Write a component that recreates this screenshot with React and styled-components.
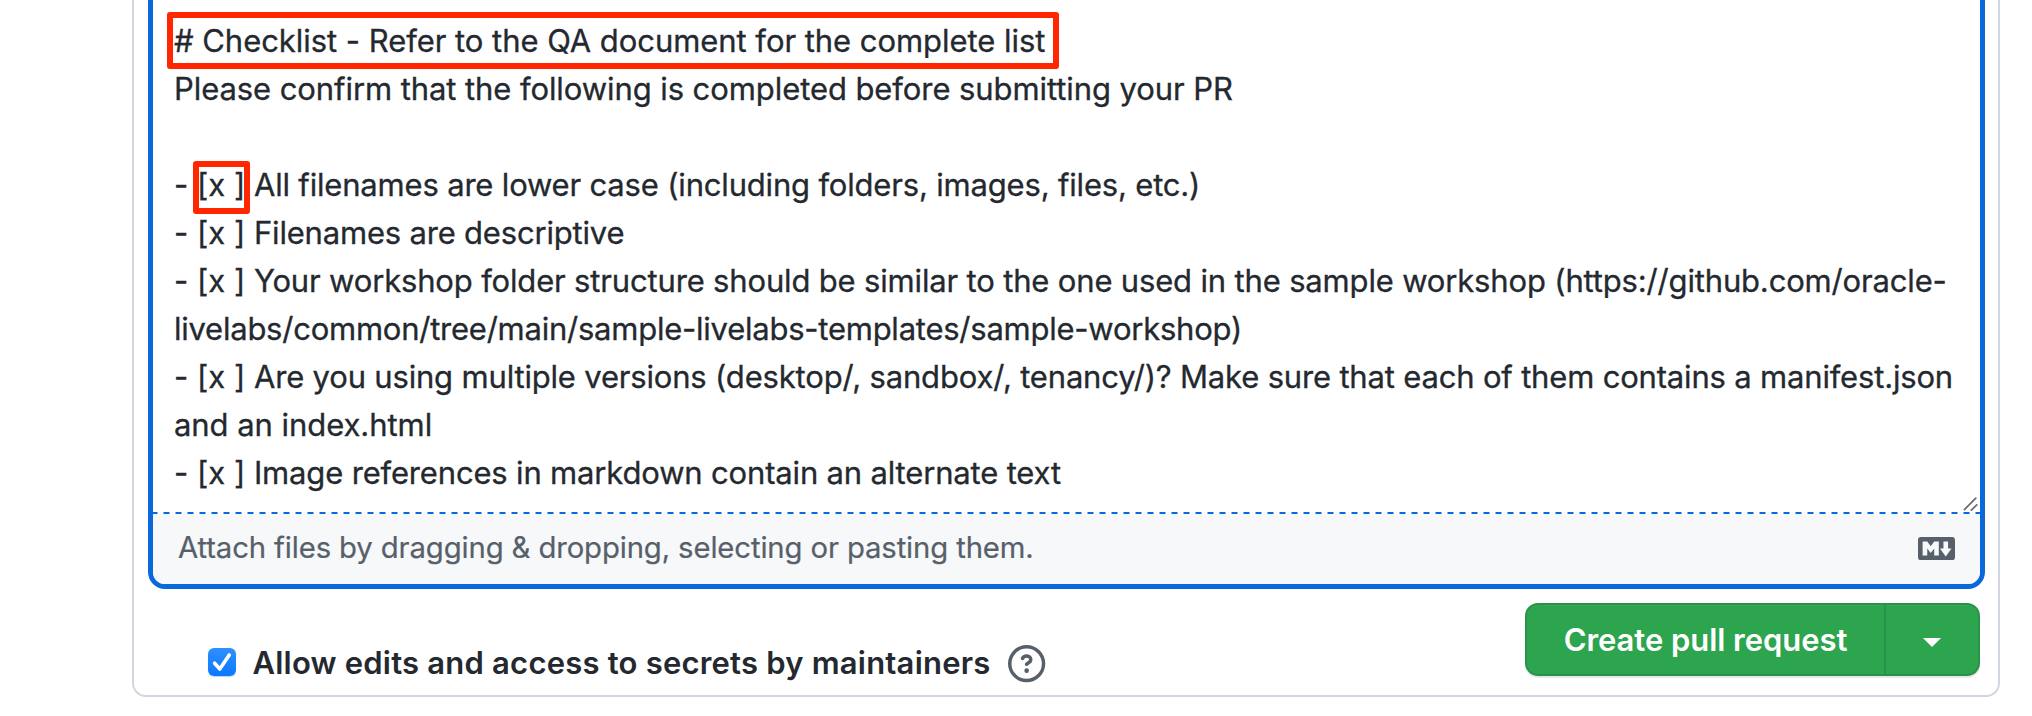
import React from 'react';
import styled, { createGlobalStyle } from 'styled-components';

const GlobalStyle = createGlobalStyle`
  * { box-sizing: border-box; }
  body {
    margin: 0;
    background: #ffffff;
    color: #24292f;
    font-family: Inter, "Liberation Sans", sans-serif;
    overflow: hidden;
  }
`;

const Card = styled.main`
  width: 1868px;
  height: 697px;
  margin-left: 132px;
  padding: 0 13px 0 14px;
  border: 2px solid #d0d7de;
  border-top: 0;
  border-radius: 0 0 14px 14px;
`;

const Editor = styled.section`
  display: flex;
  flex-direction: column;
  height: 589px;
  border: 5px solid #0969da;
  border-top: 0;
  border-radius: 0 0 17px 17px;
  overflow: hidden;
`;

const TextArea = styled.div`
  position: relative;
  height: 512px;
  padding: 17px 0 0 21px;
  font-size: 31px;
  line-height: 48px;
  -webkit-text-stroke: 0.3px currentColor;
`;

const Line = styled.div`
  height: 48px;
  white-space: pre;
  letter-spacing: ${(p) => p.$spacing || 0}px;
`;

const Marker = styled.span`
  letter-spacing: 0;
`;

const Highlighted = styled.span`
  position: relative;
`;

const RedBox = styled.span`
  position: absolute;
  left: ${(p) => p.$left}px;
  top: ${(p) => p.$top}px;
  width: ${(p) => p.$width}px;
  height: ${(p) => p.$height}px;
  border: 6px solid #ff2600;
  border-radius: 3px;
`;

const Grip = styled.svg`
  position: absolute;
  right: 2px;
  bottom: 0;
  width: 16px;
  height: 16px;
`;

const Divider = styled.div`
  height: 2px;
  background: linear-gradient(to right, #0969da 6px, transparent 6px) -1.5px 0 / 12px 2px repeat-x;
`;

const AttachBar = styled.footer`
  flex: 1;
  display: flex;
  align-items: center;
  justify-content: space-between;
  padding: 0 25px 1px;
  background: #f6f8fa;
  color: #57606a;
  font-size: 29.3px;
  letter-spacing: -0.13px;
`;

const AttachHint = styled.span`
  padding-bottom: 2px;
  -webkit-text-stroke: 0.2px currentColor;
`;

const MarkdownIcon = styled.svg`
  width: 37px;
  height: 37px;
  fill: #57606a;
`;

const Actions = styled.div`
  display: flex;
  justify-content: space-between;
  align-items: flex-start;
  padding: 14px 5px 0 60px;
`;

const Option = styled.label`
  display: flex;
  align-items: center;
  height: 48px;
  margin-top: 36px;
  font-size: 31px;
  font-weight: 600;
  line-height: 48px;
`;

const CheckBox = styled.span`
  display: flex;
  width: 28px;
  height: 28px;
  margin: 0 16.5px 3px 0;
  border-radius: 6px;
  background: linear-gradient(#2f90ff, #0a78ff);
  box-shadow: 0 1px 1px rgba(10, 120, 255, 0.3);
`;

const OptionText = styled.span`
  letter-spacing: 0.21px;
`;

const HelpIcon = styled.svg`
  width: 37.3px;
  height: 37.3px;
  margin: 2px 0 0 18px;
  fill: #57606a;
`;

const ButtonGroup = styled.div`
  display: flex;
  height: 73px;
  border-radius: 13px;
  box-shadow: 0 2px 0 rgba(27, 31, 36, 0.1);
`;

const GreenButton = styled.button`
  display: flex;
  align-items: center;
  justify-content: center;
  width: ${(p) => p.$width}px;
  padding: 0;
  border: 2px solid #2a914a;
  border-left-width: ${(p) => (p.$end ? 0 : 2)}px;
  border-radius: ${(p) => (p.$end ? '0 13px 13px 0' : '13px 0 0 13px')};
  background: #2da44e;
  box-shadow: inset 0 1px 0 rgba(255, 255, 255, 0.05);
  color: #ffffff;
  font: 600 31px/46px Inter, "Liberation Sans", sans-serif;
  letter-spacing: -0.05px;
`;

const Caret = styled.span`
  margin-top: 6px;
  border: 9px solid transparent;
  border-top-color: #ffffff;
  border-bottom: 0;
`;

const Item = ({ spacing, children }) => (
  <Line $spacing={spacing}>
    <Marker>{'- [x ] '}</Marker>
    {children}
  </Line>
);

export default function App() {
  return (
    <>
      <GlobalStyle />
      <Card>
        <Editor>
          <TextArea>
            <Line $spacing={-0.045}>
              <Highlighted>
                # Checklist - Refer to the QA document for the complete list
                <RedBox $left={-7} $top={-10} $width={892} $height={57} />
              </Highlighted>
            </Line>
            <Line $spacing={-0.08}>Please confirm that the following is completed before submitting your PR</Line>
            <Line />
            <Line $spacing={-0.18}>
              <Marker>
                {'- '}
                <Highlighted>
                  [x ]
                  <RedBox $left={-4} $top={-5} $width={57} $height={53} />
                </Highlighted>{' '}
              </Marker>
              All filenames are lower case (including folders, images, files, etc.)
            </Line>
            <Item spacing={-0.19}>Filenames are descriptive</Item>
            <Item spacing={-0.165}>
              Your workshop folder structure should be similar to the one used in the sample workshop (https://github.com/oracle-
            </Item>
            <Line $spacing={-0.24}>livelabs/common/tree/main/sample-livelabs-templates/sample-workshop)</Line>
            <Item spacing={-0.178}>
              Are you using multiple versions (desktop/, sandbox/, tenancy/)? Make sure that each of them contains a manifest.json
            </Item>
            <Line $spacing={-0.05}>and an index.html</Line>
            <Item spacing={-0.167}>Image references in markdown contain an alternate text</Item>
            <Grip viewBox="0 0 16 16" stroke="#6b6b6b" strokeWidth="1.7" strokeLinecap="round">
              <path d="M2.4 13.6 13.8 2.2M9.3 14.2 14.8 8.8" />
            </Grip>
          </TextArea>
          <Divider />
          <AttachBar>
            <AttachHint>Attach files by dragging &amp; dropping, selecting or pasting them.</AttachHint>
            <MarkdownIcon viewBox="0 0 16 16">
              <path
                fillRule="evenodd"
                d="M14.85 3H1.15C.52 3 0 3.52 0 4.15v7.69C0 12.48.52 13 1.15 13h13.69c.64 0 1.15-.52 1.15-1.15v-7.7C16 3.52 15.48 3 14.85 3zM9 11H7V8L5.5 9.92 4 8v3H2V5h2l1.5 2L7 5h2v6zm2.99.5L9.5 8H11V5h2v3h1.5l-2.51 3.5z"
              />
            </MarkdownIcon>
          </AttachBar>
        </Editor>
        <Actions>
          <Option>
            <CheckBox>
              <svg width="28" height="28" viewBox="0 0 28 28" fill="none" stroke="#fff" strokeWidth="3.6" strokeLinecap="round" strokeLinejoin="round">
                <path d="M6.6 15.2 11.8 21 21.2 7" />
              </svg>
            </CheckBox>
            <OptionText>Allow edits and access to secrets by maintainers</OptionText>
            <HelpIcon viewBox="0 0 16 16">
              <path d="M0 8a8 8 0 1 1 16 0A8 8 0 0 1 0 8Zm8-6.5a6.5 6.5 0 1 0 0 13 6.5 6.5 0 0 0 0-13ZM6.92 6.085h.001a.749.749 0 1 1-1.342-.67c.169-.339.436-.701.849-.977C6.845 4.16 7.369 4 8 4a2.756 2.756 0 0 1 1.637.525c.503.377.863.965.863 1.725 0 .448-.115.83-.329 1.15-.205.307-.47.513-.692.662-.109.072-.22.138-.313.195l-.006.004a6.24 6.24 0 0 0-.26.16.952.952 0 0 0-.276.245.75.75 0 0 1-1.248-.832c.184-.264.42-.489.692-.661.103-.067.207-.132.313-.195l.007-.004c.1-.061.182-.11.258-.161a.969.969 0 0 0 .277-.245C8.96 6.514 9 6.427 9 6.25a.612.612 0 0 0-.262-.525A1.27 1.27 0 0 0 8 5.5c-.369 0-.595.09-.74.187a1.01 1.01 0 0 0-.34.398ZM9 11a1 1 0 1 1-2 0 1 1 0 0 1 2 0Z" />
            </HelpIcon>
          </Option>
          <ButtonGroup>
            <GreenButton $width={361}>Create pull request</GreenButton>
            <GreenButton $width={94} $end aria-label="More options">
              <Caret />
            </GreenButton>
          </ButtonGroup>
        </Actions>
      </Card>
    </>
  );
}
